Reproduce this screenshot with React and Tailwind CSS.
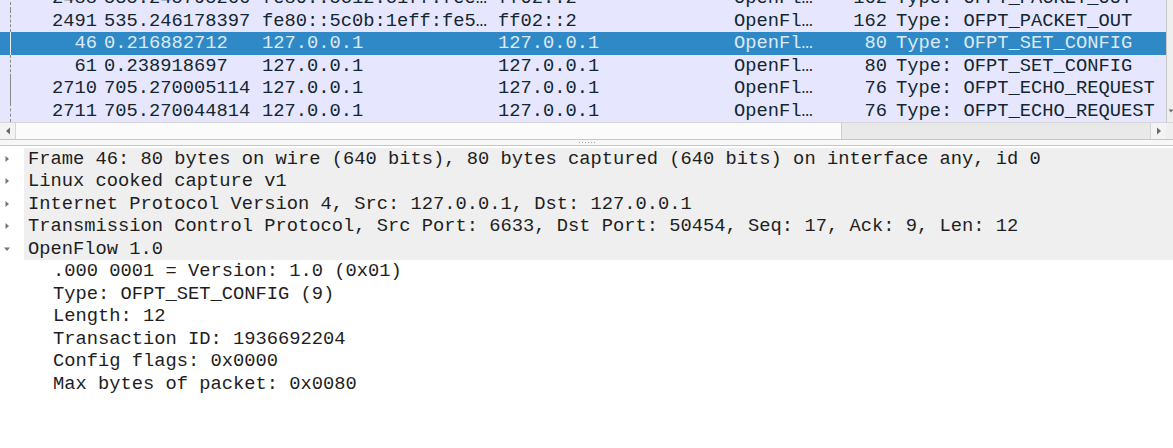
import React from 'react';

const packets = [
  { no: '2488', time: '535.245795266', src: 'fe80::5c12:c1ff:fee…', dst: 'ff02::2', proto: 'OpenFl…', len: '162', info: 'Type: OFPT_PACKET_OUT', mark: 'dashed' },
  { no: '2491', time: '535.246178397', src: 'fe80::5c0b:1eff:fe5…', dst: 'ff02::2', proto: 'OpenFl…', len: '162', info: 'Type: OFPT_PACKET_OUT', mark: 'dashed' },
  { no: '46', time: '0.216882712', src: '127.0.0.1', dst: '127.0.0.1', proto: 'OpenFl…', len: '80', info: 'Type: OFPT_SET_CONFIG', mark: 'selected', selected: true },
  { no: '61', time: '0.238918697', src: '127.0.0.1', dst: '127.0.0.1', proto: 'OpenFl…', len: '80', info: 'Type: OFPT_SET_CONFIG', mark: 'dashed' },
  { no: '2710', time: '705.270005114', src: '127.0.0.1', dst: '127.0.0.1', proto: 'OpenFl…', len: '76', info: 'Type: OFPT_ECHO_REQUEST', mark: 'solid' },
  { no: '2711', time: '705.270044814', src: '127.0.0.1', dst: '127.0.0.1', proto: 'OpenFl…', len: '76', info: 'Type: OFPT_ECHO_REQUEST', mark: 'tail' },
];

const tree = [
  { text: 'Frame 46: 80 bytes on wire (640 bits), 80 bytes captured (640 bits) on interface any, id 0', level: 0 },
  { text: 'Linux cooked capture v1', level: 0 },
  { text: 'Internet Protocol Version 4, Src: 127.0.0.1, Dst: 127.0.0.1', level: 0 },
  { text: 'Transmission Control Protocol, Src Port: 6633, Dst Port: 50454, Seq: 17, Ack: 9, Len: 12', level: 0 },
  { text: 'OpenFlow 1.0', level: 0, open: true },
  { text: '.000 0001 = Version: 1.0 (0x01)', level: 1 },
  { text: 'Type: OFPT_SET_CONFIG (9)', level: 1 },
  { text: 'Length: 12', level: 1 },
  { text: 'Transaction ID: 1936692204', level: 1 },
  { text: 'Config flags: 0x0000', level: 1 },
  { text: 'Max bytes of packet: 0x0080', level: 1 },
];

function RelatedMark({ kind }) {
  if (kind === 'selected') {
    return <div className="h-full w-px bg-[#e6eef8]" />;
  }
  if (kind === 'solid') {
    return <div className="h-full w-px bg-[#8a8a8a]" />;
  }
  if (kind === 'tail') {
    return (
      <div className="flex h-full flex-col">
        <div className="h-[3px] w-px bg-[#8a8a8a]" />
        <div className="flex-1 w-px border-l border-dashed border-[#8a8a8a]" />
      </div>
    );
  }
  return <div className="h-full w-px border-l border-dashed border-[#8a8a8a]" />;
}

function PacketRow({ p }) {
  const rowCls = p.selected
    ? 'bg-[#2f89c7] text-[#dce9f6]'
    : 'bg-[#e7e6ff] text-[#12272e]';
  return (
    <div className={`flex h-[22.5px] items-center whitespace-pre ${rowCls}`}>
      <div className="flex h-full w-[100px] shrink-0 items-center">
        <div className="flex h-full w-[21px] shrink-0 justify-center">
          <RelatedMark kind={p.mark} />
        </div>
        <div className="flex-1 pr-[3px] text-right">{p.no}</div>
      </div>
      <div className="w-[158px] shrink-0 pl-[4px]">{p.time}</div>
      <div className="w-[236px] shrink-0 pl-[4px]">{p.src}</div>
      <div className="w-[236px] shrink-0 pl-[4px]">{p.dst}</div>
      <div className="w-[84px] shrink-0 pl-[4px]">{p.proto}</div>
      <div className="w-[77px] shrink-0 pr-[4px] text-right">{p.len}</div>
      <div className="flex-1 pl-[5px]">{p.info}</div>
    </div>
  );
}

function Arrow({ open }) {
  if (open) {
    return (
      <svg width="10" height="10" viewBox="0 0 10 10">
        <path d="M2 3.5 L8 3.5 L5 7 Z" fill="#767676" />
      </svg>
    );
  }
  return (
    <svg width="10" height="10" viewBox="0 0 10 10">
      <path d="M3.5 2 L7 5 L3.5 8 Z" fill="#767676" />
    </svg>
  );
}

function TreeRow({ item }) {
  if (item.level === 1) {
    return (
      <div className="flex h-[22.5px] items-center whitespace-pre pl-[53px] text-[#1e1e1e]">
        {item.text}
      </div>
    );
  }
  return (
    <div className="flex h-[22.5px] items-center whitespace-pre text-[#1e1e1e]">
      <div className="flex w-[24px] shrink-0 items-center pl-[2px]">
        <Arrow open={item.open} />
      </div>
      <div className="flex h-full flex-1 items-center bg-[#efefef] pl-[4px]">{item.text}</div>
    </div>
  );
}

export default function App() {
  return (
    <div
      className="flex h-[448px] w-[1173px] flex-col overflow-hidden bg-white text-[18.75px] leading-[22.5px]"
      style={{ fontFamily: '"Liberation Mono", "DejaVu Sans Mono", monospace' }}
    >
      {/* packet list */}
      <div className="flex h-[122px] shrink-0 overflow-hidden">
        <div className="flex-1 overflow-hidden">
          <div className="-mt-[13px]">
            {packets.map((p) => (
              <PacketRow key={p.no} p={p} />
            ))}
          </div>
        </div>
        <div className="flex w-[7px] shrink-0 flex-col justify-end border-l border-[#c9c9c9] bg-[#efefef] pb-[8px]">
          <svg width="6" height="6" viewBox="0 0 6 6" className="ml-[1px]">
            <path d="M0.5 1.5 L5.5 1.5 L3 4.5 Z" fill="#6a6a6a" />
          </svg>
        </div>
      </div>

      {/* horizontal scrollbar */}
      <div className="flex h-[17px] shrink-0 border-t border-[#d6d6d6] bg-[#e9e9e9]">
        <div className="flex w-[16px] shrink-0 items-center justify-center border-r border-[#d6d6d6] bg-[#f3f3f3]">
          <svg width="6" height="8" viewBox="0 0 6 8">
            <path d="M5 0.5 L5 7.5 L1 4 Z" fill="#6a6a6a" />
          </svg>
        </div>
        <div className="w-[826px] shrink-0 border-r border-[#cfcfcf] bg-[#fbfbfb]" />
        <div className="flex-1" />
        <div className="flex w-[16px] shrink-0 items-center justify-center border-l border-[#d6d6d6] bg-[#f3f3f3]">
          <svg width="6" height="8" viewBox="0 0 6 8">
            <path d="M1 0.5 L1 7.5 L5 4 Z" fill="#6a6a6a" />
          </svg>
        </div>
        <div className="w-[7px] shrink-0 bg-[#efefef]" />
      </div>

      {/* splitter */}
      <div className="flex h-[7px] shrink-0 items-center justify-center border-t border-b border-[#c6c6c6] bg-[#f7f7f7]">
        <div className="flex gap-[2px]">
          {[0, 1, 2, 3, 4, 5].map((i) => (
            <div key={i} className="h-px w-px bg-[#a0a0a0]" />
          ))}
        </div>
      </div>

      {/* packet details */}
      <div className="flex-1 overflow-hidden pt-[1.5px]">
        {tree.map((item, i) => (
          <TreeRow key={i} item={item} />
        ))}
      </div>
    </div>
  );
}
